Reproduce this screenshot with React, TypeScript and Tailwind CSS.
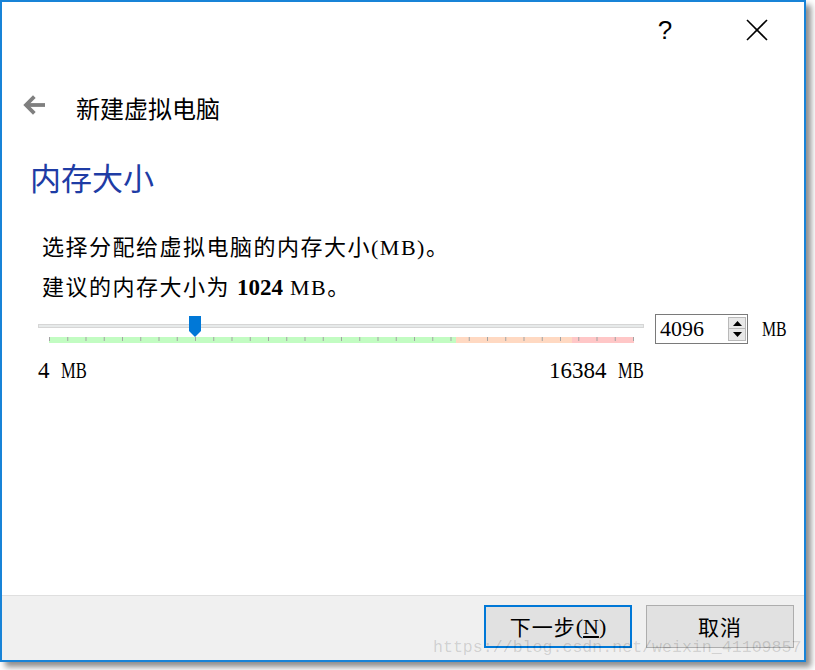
import React from "react";

const SERIF = "'Liberation Serif', 'Noto Sans CJK SC', serif";
const SANS = "'Noto Sans CJK SC', 'Liberation Sans', sans-serif";

function Ticks() {
  const ticks = [];
  for (let i = 0; i <= 32; i++) {
    const x = 0.5 + i * 18.25;
    ticks.push(<line key={i} x1={x} y1={0} x2={x} y2={4} stroke="#a3a3a3" strokeWidth={1} />);
  }
  return (
    <svg width="586" height="6" viewBox="0 0 586 6" className="block">
      <rect x="0" y="0" width="407" height="6" fill="#c2fcc2" />
      <rect x="407" y="0" width="116" height="6" fill="#ffd9c2" />
      <rect x="523" y="0" width="62" height="6" fill="#ffc7c7" />
      {ticks}
    </svg>
  );
}

export default function App() {
  return (
    <div className="relative w-[815px] h-[670px] bg-white overflow-hidden" style={{ fontFamily: SERIF }}>
      <div className="w-[806px] h-[662px] border-2 border-[#1883d7] bg-white flex flex-col shadow-[5px_5px_6px_rgba(0,0,0,0.45)]">
        {/* title bar */}
        <div className="h-[56px] shrink-0 flex items-center justify-end pr-[24px]">
          <span className="w-[30px] text-center text-[26px] leading-none text-black" style={{ fontFamily: "'Liberation Sans', sans-serif" }}>?</span>
          <div className="ml-[54px] w-[46px] h-[40px] flex items-center justify-center">
            <svg width="22" height="22" viewBox="0 0 22 22">
              <line x1="1" y1="1" x2="21" y2="21" stroke="#000" strokeWidth="1.6" />
              <line x1="21" y1="1" x2="1" y2="21" stroke="#000" strokeWidth="1.6" />
            </svg>
          </div>
        </div>

        {/* header */}
        <div className="mt-[28px] h-[44px] shrink-0 flex items-center pl-[20px]">
          <svg width="24" height="20" viewBox="0 0 24 20" className="-mt-[6px]">
            <polyline points="11,3 4,10 11,17" fill="none" stroke="#7f7f7f" strokeWidth="3.8" strokeLinecap="square" />
            <line x1="4" y1="10" x2="23" y2="10" stroke="#7f7f7f" strokeWidth="3.8" />
          </svg>
          <span className="ml-[30px] text-[24px] leading-none text-black" style={{ fontFamily: SANS }}>新建虚拟电脑</span>
        </div>

        {/* heading */}
        <div className="mt-[27px] h-[40px] shrink-0 pl-[28px] text-[31px] leading-[40px] text-[#1e3ca5]" style={{ fontFamily: SANS }}>
          内存大小
        </div>

        {/* description */}
        <div className="mt-[31px] shrink-0 pl-[40px] text-[22px] leading-[40px] tracking-[1.5px] text-black">
          <div>选择分配给虚拟电脑的内存大小(MB)。</div>
          <div>
            建议的内存大小为 <span className="font-bold text-[23px] tracking-normal">1024</span> MB。
          </div>
        </div>

        {/* slider row */}
        <div className="mt-[2px] h-[36px] shrink-0 flex items-start pl-[36px]">
          <div className="relative w-[606px] h-[36px]">
            <div className="mt-[14px] h-[4px] border border-[#d6d6d6] bg-[#e7eaea]" />
            <div className="mt-[9px] ml-[11px]">
              <Ticks />
            </div>
            <svg width="12" height="21" viewBox="0 0 12 21" className="absolute left-[151px] top-[6px]">
              <path d="M0 0 H12 V15 L6 21 L0 15 Z" fill="#0078d7" />
            </svg>
          </div>
          <div className="ml-[11px] mt-[4px] flex items-center">
            <div className="w-[93px] h-[30px] border border-[#7a7a7a] bg-white flex items-center">
              <span className="flex-1 pl-[4px] text-[22px] leading-none text-black">4096</span>
              <div className="mr-[1px] flex flex-col">
                <div className="w-[18px] h-[12px] border border-[#b9b9b9] bg-[#e8e8e8] flex items-center justify-center">
                  <svg width="9" height="5" viewBox="0 0 9 5"><path d="M0 5 L4.5 0 L9 5 Z" fill="#000" /></svg>
                </div>
                <div className="w-[18px] h-[12px] border border-t-0 border-[#b9b9b9] bg-[#e8e8e8] flex items-center justify-center">
                  <svg width="9" height="5" viewBox="0 0 9 5"><path d="M0 0 L9 0 L4.5 5 Z" fill="#000" /></svg>
                </div>
              </div>
            </div>
            <span className="ml-[14px] inline-block origin-left scale-x-[0.72] text-[22px] leading-none text-black">MB</span>
          </div>
        </div>

        {/* labels */}
        <div className="mt-[13px] h-[24px] shrink-0 ml-[36px] w-[606px] flex justify-between text-[23px] leading-[24px] text-black">
          <span>4 <span className="ml-[6px] inline-block origin-left scale-x-[0.72]">MB</span></span>
          <span>16384 <span className="ml-[6px] inline-block origin-left scale-x-[0.72] mr-[-10px]">MB</span></span>
        </div>

        <div className="flex-1" />

        {/* footer */}
        <div className="h-[65px] shrink-0 border-t border-[#dfdfdf] bg-[#f0f0f0] flex justify-end items-start pt-[9px] pr-[10px] gap-[14px]">
          <button className="w-[148px] h-[43px] border-2 border-[#0078d7] bg-[#e1e1e1] flex items-center justify-center text-[21px] text-black">
            <span style={{ fontFamily: SANS }} className="tracking-[1px]">下一步</span>
            <span className="text-[22px]">(<span className="underline">N</span>)</span>
          </button>
          <button className="w-[148px] h-[43px] border border-[#adadad] bg-[#e1e1e1] flex items-center justify-center text-[21px] text-black tracking-[1px]" style={{ fontFamily: SANS }}>
            取消
          </button>
        </div>
      </div>

      {/* watermark */}
      <div className="absolute left-[433px] top-[637px] text-[16.6px] leading-[22px] text-black/15 whitespace-nowrap pointer-events-none" style={{ fontFamily: "'Liberation Mono', monospace" }}>
        https://blog.csdn.net/weixin_41109857
      </div>
    </div>
  );
}
